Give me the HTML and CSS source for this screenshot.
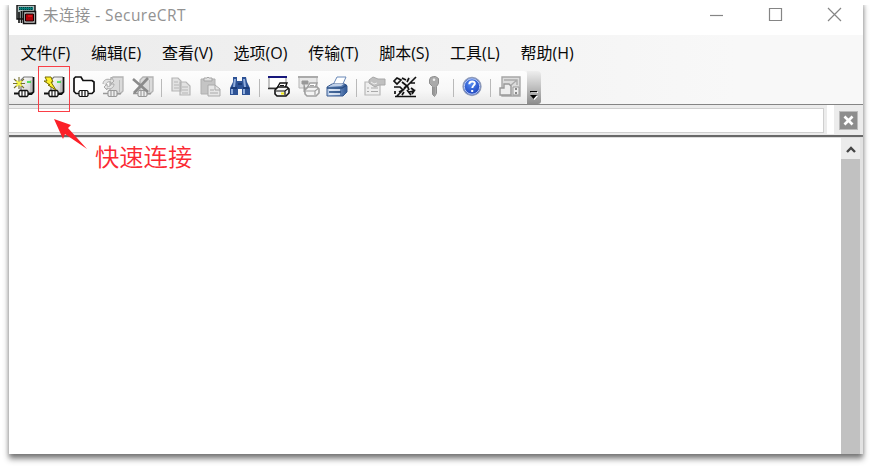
FILE: index.html
```
<!DOCTYPE html>
<html lang="zh-CN">
<head>
<meta charset="utf-8">
<title>SecureCRT</title>
<link rel="stylesheet" href="styles.css">
</head>
<body>
<svg class="defs" width="0" height="0">
  <defs>
    <linearGradient id="body" x1="0" y1="0" x2="1" y2="1"><stop offset="0" stop-color="#fff"/><stop offset="1" stop-color="#c4c4c4"/></linearGradient>
    <linearGradient id="blue" x1="0" y1="0" x2="1" y2="0"><stop offset="0" stop-color="#c0d4ef"/><stop offset="1" stop-color="#2f5796"/></linearGradient>
    <radialGradient id="help" cx=".45" cy=".35" r=".7"><stop offset="0" stop-color="#548bf2"/><stop offset="1" stop-color="#1438b5"/></radialGradient>
    <g id="case"><path d="M8 4l3-3h10v14l-3 3H8z" fill="url(#body)"/><path d="M8 15V4l3-3h9" fill="none" stroke="#777" stroke-width="1.200"/><path d="M20.500 1v15l-2 2H15" fill="none" stroke="#111" stroke-width="1.800"/><path d="M18 4v12" stroke="#999" stroke-width=".8"/><path d="M14 6h4" stroke="#25df36" stroke-width="1.500"/></g>
    <g id="plug"><path d="M1 17.500h5M15 17.500h4" stroke="#111" stroke-width="2"/><path d="M7 14.500h7l1 1v4l-1 1H7l-1-1v-4z" fill="#fff" stroke="#111" stroke-width="1.300"/><path d="M9 14v7M12 14v7" stroke="#111" stroke-width="1.100"/></g>
    <g id="graycase"><path d="M8 4l3-3h10v14l-3 3H8z" fill="#dadada" stroke="#b3b3b3" stroke-width="1.300"/><path d="M17.500 4v12" stroke="#bbb"/><path d="M1 17.500h5M15 17.500h4" stroke="#999" stroke-width="1.600"/><path d="M7 14.500h7l1 1v4l-1 1H7l-1-1v-4zM9 14v7M12 14v7" fill="#eee" stroke="#999" stroke-width="1.100"/></g>
    <g id="smallprinter"><path d="M9 12l3-5h7l-2 5" fill="#fff" stroke="currentColor" stroke-width="1.400"/><path d="M7 14l3-3h9l2 2v4l-3 3H9l-2-2z" fill="#f4f4f4" stroke="currentColor" stroke-width="1.600"/><path d="M8 15h9l4-3M12 9.500h4M17 15v4" fill="none" stroke="currentColor" stroke-width="1.200"/></g>
  </defs>
</svg>
<div class="window">
  <header class="titlebar">
    <svg class="appicon" viewBox="0 0 21 21"><path d="M1 1h18v14H1z" fill="#aebcbc" stroke="#111" stroke-width="1.4"/><path d="M3 3h14v3H3z" fill="#087d7a"/><path d="M3 3.5h14M3 5.5h14" stroke="#003c3c" stroke-dasharray="1 1"/><path d="M3 8v11M5.5 7v12" stroke="#111" stroke-width="1.6"/><path d="M7.500 7.500h12v12h-12z" fill="#c7c7c7" stroke="#111" stroke-width="1.5"/><path d="M9.500 10h8v7h-8z" fill="#b00008" stroke="#190000"/><path d="M12 12h4" stroke="#f22"/></svg>
    <span class="title">未连接 - SecureCRT</span>
    <div class="controls">
      <svg viewBox="0 0 15 15"><path d="M1 8.500h13"/></svg>
      <svg viewBox="0 0 15 15"><path d="M1.500 1.500h12v12h-12z"/></svg>
      <svg viewBox="0 0 15 15"><path d="M1 1l13 13M14 1L1 14"/></svg>
    </div>
  </header>
  <nav class="menu">
    <span>文件(F)</span><span>编辑(E)</span><span>查看(V)</span><span>选项(O)</span><span>传输(T)</span><span>脚本(S)</span><span>工具(L)</span><span>帮助(H)</span>
  </nav>
  <div class="toolrow">
    <div class="toolbar">
      <button><svg viewBox="0 0 22 22"><use href="#case"/><path d="M6 1v12M1 3l10 9M11 3L1 12M0 7.500h12" stroke="#77712e" stroke-width="1.100"/><path d="M3.500 5l5 5M8.500 5l-5 5" stroke="#f5f544" stroke-width="1.800"/><use href="#plug"/></svg></button>
      <button><svg viewBox="0 0 22 22"><use href="#case"/><use href="#plug"/><path d="M2 1h6l2 5h-2l5 8-8-5h2L1 5h3z" fill="#fff12b" stroke="#776c00"/></svg></button>
      <button><svg viewBox="0 0 22 22"><path d="M6 17.500H3L1 15.500V2.500L2.500 1H8l2 3.500h9L21 6v9.500l-2 2h-4" fill="#fff" stroke="#111" stroke-width="1.700"/><path d="M7 14.500h7l1 1v4l-1 1H7l-1-1v-4zM9 14v7M12 14v7" fill="#fff" stroke="#111" stroke-width="1.200"/></svg></button>
      <button><svg viewBox="0 0 22 22"><use href="#graycase"/><path d="M1 8c0-4 4-6 8-4V1l3 4-3 3V6C6 5 4 7 4 9M12 8c0 4-4 6-7 4v2L2 11l3-3v2c2 1 4 0 4-2z" fill="#e3e3e3" stroke="#aaa"/></svg></button>
      <button><svg viewBox="0 0 22 22"><use href="#graycase"/><path d="M1 3l15 13M16 2L2 17" stroke="#8b8b8b" stroke-width="2.600"/></svg></button>
      <i></i>
      <button><svg viewBox="0 0 22 22"><g fill="#e2e2e2" stroke="#b5b5b5" stroke-width="1.200"><path d="M2 2h6l3 3v10H2zM10 6h6l4 4v9H10z"/><path d="M4 6h4M4 9h5M4 12h5M12 11h6M12 14h6M12 17h6"/></g></svg></button>
      <button><svg viewBox="0 0 22 22"><path d="M2 3h14v15H2z" fill="#c4c4c4" stroke="#b0b0b0"/><path d="M5 5V2h3l1-1 1 1h3v3z" fill="#e0e0e0" stroke="#a5a5a5"/><path d="M9 9h7l5 4v7H9z" fill="#e6e6e6" stroke="#aaa"/><path d="M16 9v5h5M11 14h4M11 17h8" fill="none" stroke="#aaa"/></svg></button>
      <button><svg viewBox="0 0 22 22"><path d="M4 1h4v4h5V1h4l1 5 3 6v7h-8v-6H9v6H1v-7l3-6z" fill="#2d5295"/><path d="M6 3l-1 8M15 3l1 8M3 13v5M15 13v5" stroke="#91aedd" stroke-width="2"/><path d="M9 8h4M2 12h6M14 12h6" stroke="#15346d" stroke-width="1.500"/></svg></button>
      <i></i>
      <button><svg class="left" viewBox="0 0 22 22"><path d="M1 1h17v11H1z" fill="#fff" stroke="#8a8a8a"/><path d="M0 1h19" stroke="#17177b" stroke-width="2"/><path d="M0 12.500h8" stroke="#333" stroke-width="1.500"/><g color="#111"><use href="#smallprinter"/></g><path d="M13 17.500h3" stroke="#f4ed15" stroke-width="2"/></svg></button>
      <button><svg class="left" viewBox="0 0 22 22"><path d="M1 1h18v11H1z" fill="#e8e8e8" stroke="#b5b5b5"/><path d="M0 1h20" stroke="#aaa" stroke-width="2"/><path d="M4 5h6v3H4zM6 8v8h3" fill="#999" stroke="#999" stroke-width="1"/><g color="#a0a0a0"><use href="#smallprinter"/></g></svg></button>
      <button><svg viewBox="0 0 22 22"><path d="M7 9l4-8h9l-4 9z" fill="#fff" stroke="#6988b7"/><path d="M1 11l5-3h13l2 2v6l-4 4H1z" fill="url(#blue)" stroke="#36598f"/><path d="M1 12h15l5-3M3 16h12" fill="none" stroke="#294d83" stroke-width="1.300"/><path d="M4 10h11l3-2H7z" fill="#bfd0e8"/><path d="M3 14h11M3 18h11" stroke="#eef4fc" stroke-width="1.500"/></svg></button>
      <i></i>
      <button><svg viewBox="0 0 22 22"><path d="M1 6h15v13H1z" fill="#eee" stroke="#b8b8b8" stroke-width="1.200"/><path d="M3 12h2M7 12h7M3 15.500h2M7 15.500h7" stroke="#aaa" stroke-width="1.200"/><path d="M5 4l4-3 5 2h7v6h-6l-4 2-6-4z" fill="#c0c0c0" stroke="#a8a8a8"/><path d="M7 6l3 2 3-1" fill="none" stroke="#eee"/></svg></button>
      <button><svg class="map" viewBox="0 0 24 22"><path d="M1 1h22v20H1z" fill="#f4f4f4"/><path d="M1 5l3-3 4 2-4 4zM9 2l4 2M23 1L4 20M9 6l5 4-3 2M1 11h6l3 3-4 2M17 7h5M14 9l2 5M16 2l-2 4M18 12l4 3M14 14l4 5M2 15v3M16 16l5-1-2 3M2 20.500h21M9 19l2-3" fill="none" stroke="#111" stroke-width="1.700"/></svg></button>
      <button><svg viewBox="0 0 22 22"><path d="M7.500 1.500l3-1h2l3 2v5l-2 3v7l-2 3-2-2v-8l-3-3V4z" fill="#aaa" stroke="#8e8e8e"/><circle cx="11" cy="3.800" r="1.300" fill="#eee"/><path d="M11 11v8" stroke="#888"/></svg></button>
      <i></i>
      <button><svg viewBox="0 0 22 22"><circle cx="11" cy="10.500" r="9" fill="url(#help)" stroke="#8f9bb8" stroke-width="1.300"/><circle cx="11" cy="10.500" r="7.700" fill="none" stroke="#dce7ff" stroke-width=".8"/><path d="M8.300 8.300c0-4 6-3.600 5.500-.5-.3 1.500-2.500 2-2.500 4.200" fill="none" stroke="#fff" stroke-width="2"/><path d="M10.200 14h2v2h-2z" fill="#fff"/></svg></button>
      <i></i>
      <button><svg viewBox="0 0 22 22"><path d="M3 1h18v19H3z" fill="#dcdcdc" stroke="#a6a6a6" stroke-width="1.400"/><path d="M5 4h13v5M18 4l-7 6" fill="none" stroke="#aaa" stroke-width="1.400"/><path d="M1 12h4V8h5l2 2v9H1z" fill="#eee" stroke="#999" stroke-width="1.400"/><path d="M14 11h6v8h-6z" fill="#eee" stroke="#999"/><path d="M17 12v2M17 16v2" stroke="#888" stroke-width="2"/></svg></button>
    </div>
    <div class="overflow"><svg viewBox="0 0 8 9"><path d="M1 1h7v1H1zM1 5h7L4.500 9z" fill="#fff"/><path d="M0 0h7v1.300H0zM0 4h7L3.500 8z" fill="#000"/></svg></div>
  </div>
  <div class="connectbar">
    <div class="field"></div>
    <div class="gap"></div>
    <div class="closearea"><svg viewBox="0 0 19 19"><path d="M5 5l9 9M14 5l-9 9" stroke="#fff" stroke-width="3"/></svg></div>
  </div>
  <main class="terminal">
    <div class="screen"></div>
    <div class="scroll"><div class="up"><svg viewBox="0 0 10 8"><path d="M1 7l4-4 4 4" fill="none" stroke="#444" stroke-width="2.400"/></svg></div><div class="thumb"></div></div>
  </main>
  <div class="highlight"></div>
  <svg class="arrow" viewBox="0 0 34 32"><path d="M0 0l17 6-3 3 19 21-22-15-2 5z" fill="#fb2028"/></svg>
  <span class="note">快速连接</span>
</div>
</body>
</html>
```
FILE: styles.css
```
* { box-sizing: border-box; }
body { margin: 0; height: 470px; overflow: hidden; background: #fff; font-family: "Open Sans", "Noto Sans CJK SC", sans-serif; }
.defs { position: absolute; }
.window { position: relative; width: 854px; height: 454px; margin-left: 9px; display: flex; flex-direction: column; background: #fff; box-shadow: 0 5px 6px rgba(0,0,0,.46), 0 2px 4px rgba(0,0,0,.18); clip-path: inset(5px -9px -16px -9px); }
.titlebar { height: 35px; flex: none; display: flex; align-items: flex-start; padding: 4px 21px 0 7px; }
.appicon { width: 21px; height: 21px; flex: none; }
.title { margin: 0 auto 0 6px; font-size: 15.5px; line-height: 23px; letter-spacing: .42px; color: #929292; white-space: nowrap; }
.controls { display: flex; gap: 44px; padding-top: 3px; }
.controls svg { width: 15px; height: 15px; fill: none; stroke: #858585; stroke-width: 1.2; }
.menu { height: 36px; flex: none; display: flex; gap: 20.7px; padding: 6px 0 0 11.5px; font-size: 16px; line-height: 24px; letter-spacing: 0; color: #080808; background: linear-gradient(90deg, #ebebeb, #f8f8f8 85%); }
.menu span { flex: none; white-space: nowrap; }
.toolrow { height: 34px; flex: none; display: flex; background: linear-gradient(90deg, #ebebeb, #f8f8f8 85%); border-bottom: 1px solid #858585; }
.toolbar { width: 518px; height: 33px; display: flex; align-items: center; padding-left: .5px; background: linear-gradient(#fdfdfd, #f7f7f7 60%, #e8e8e8); border-radius: 0 4px 4px 0; }
.toolbar button { width: 29.7px; height: 33px; flex: none; border: 0; padding: 0 0 1px; background: none; display: grid; place-items: center; }
.toolbar svg { width: 22px; height: 22px; }
.toolbar .map { width: 24px; }
.toolbar .left { margin-left: 2px; }
.toolbar i { width: 8px; height: 18px; flex: none; background: linear-gradient(#b9b9b9, #b9b9b9) center / 1px 100% no-repeat; }
.overflow { width: 14px; height: 33px; display: flex; justify-content: center; align-items: flex-end; padding-bottom: 4px; background: linear-gradient(#eee, #c9c9c9 40%, #8d8d8d); border-radius: 0 4px 3px 0; }
.overflow svg { width: 8px; height: 9px; }
.connectbar { height: 32px; flex: none; display: flex; background: #ececec; border-bottom: 2px solid #686868; box-shadow: 0 1px #ddd; }
.field { width: 815px; height: 25px; margin: 3px 3px 0 0; background: #fff; border: 1px solid #cfcfcf; border-left: 0; }
.gap { width: 7px; height: 29px; background: #fff; }
.closearea { flex: 1; display: grid; place-items: center; }
.closearea svg { width: 19px; height: 19px; background: #8d8d8d; border: 1px solid #bbb; }
.terminal { flex: 1; display: flex; min-height: 0; padding-top: 1px; }
.screen { flex: 1; background: #fff; }
.scroll { width: 22px; border-right: 3px solid #e2e2e2; display: flex; flex-direction: column; background: #ebebeb; }
.up { height: 21px; display: grid; place-items: center; }
.up svg { width: 10px; height: 8px; }
.thumb { flex: 1; background: #c1c1c1; }
.highlight { position: absolute; left: 29px; top: 66px; width: 32px; height: 46px; border: 1px solid #fa3e46; }
.arrow { position: absolute; left: 45px; top: 119px; width: 34px; height: 32px; }
.note { position: absolute; left: 86px; top: 139px; font: 350 24.3px/34px "Noto Sans CJK SC", sans-serif; color: #fb2933; white-space: nowrap; }
```
